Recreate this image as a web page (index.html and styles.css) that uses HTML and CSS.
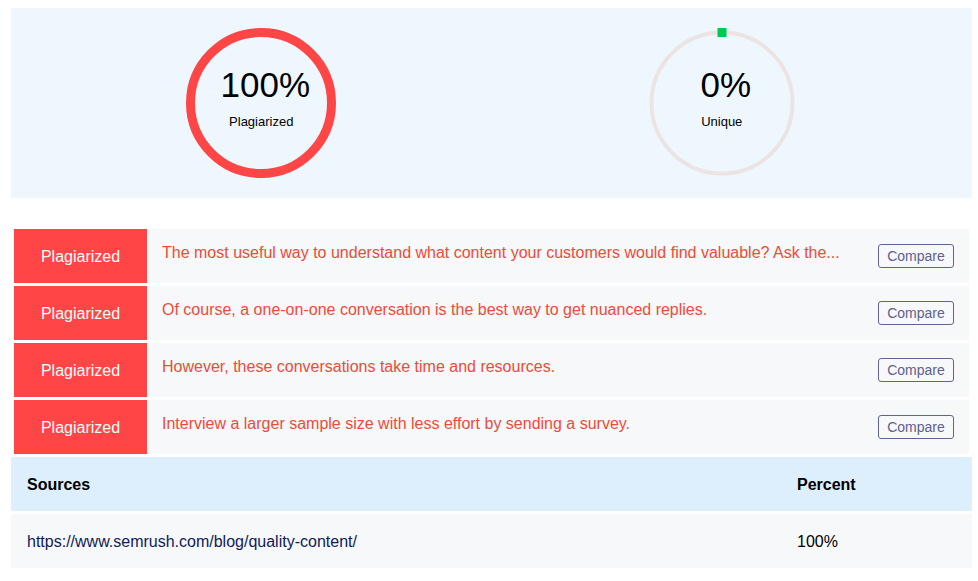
FILE: index.html
```html
<!DOCTYPE html>
<html>
<head>
<meta charset="utf-8">
<link rel="stylesheet" href="styles.css">
</head>
<body>
<section class="summary">
  <div class="gauge">
    <svg class="ring" width="150" height="150" viewBox="0 0 150 150">
      <circle cx="75" cy="75" r="70.5" fill="none" stroke="#ebe4e2" stroke-width="4"/>
      <circle cx="75" cy="75" r="70.5" fill="none" stroke="#ff4646" stroke-width="9"/>
    </svg>
    <div class="gauge-text">
      <div class="pct">100%</div>
      <div class="cap">Plagiarized</div>
    </div>
  </div>
  <div class="gauge">
    <svg class="ring" width="150" height="150" viewBox="0 0 150 150">
      <circle cx="75" cy="75" r="70.5" fill="none" stroke="#ebe4e2" stroke-width="4"/>
      <rect x="70.5" y="0" width="9" height="9" fill="#00c853"/>
    </svg>
    <div class="gauge-text">
      <div class="pct">0%</div>
      <div class="cap">Unique</div>
    </div>
  </div>
</section>

<section class="matches">
  <div class="match">
    <div class="tag">Plagiarized</div>
    <div class="sentence">The most useful way to understand what content your customers would find valuable? Ask the...</div>
    <div class="action"><button class="compare">Compare</button></div>
  </div>
  <div class="match">
    <div class="tag">Plagiarized</div>
    <div class="sentence">Of course, a one-on-one conversation is the best way to get nuanced replies.</div>
    <div class="action"><button class="compare">Compare</button></div>
  </div>
  <div class="match">
    <div class="tag">Plagiarized</div>
    <div class="sentence">However, these conversations take time and resources.</div>
    <div class="action"><button class="compare">Compare</button></div>
  </div>
  <div class="match">
    <div class="tag">Plagiarized</div>
    <div class="sentence">Interview a larger sample size with less effort by sending a survey.</div>
    <div class="action"><button class="compare">Compare</button></div>
  </div>
</section>

<section class="sources">
  <div class="src-row src-head">
    <div class="src-cell">Sources</div>
    <div class="src-cell">Percent</div>
  </div>
  <div class="src-row src-data">
    <div class="src-cell url">https://www.semrush.com/blog/quality-content/</div>
    <div class="src-cell">100%</div>
  </div>
</section>
</body>
</html>
```

FILE: styles.css
```css
* { box-sizing: border-box; }

html, body {
  margin: 0;
  padding: 0;
  background: #ffffff;
}

body {
  font-family: "Liberation Sans", Arial, sans-serif;
  color: #000;
  padding: 8px 6px 0 11px;
}

.summary {
  background: #eff7fe;
  height: 190px;
  padding: 20px 20px;
  display: grid;
  grid-template-columns: 1fr 1fr;
}

.gauge {
  position: relative;
  width: 150px;
  height: 150px;
  justify-self: center;
}

.ring {
  display: block;
}

.gauge-text {
  position: absolute;
  inset: 0;
  text-align: center;
}

.pct {
  font-size: 35px;
  line-height: 40px;
  margin-top: 37px;
  padding-left: 8px;
}

.cap {
  font-size: 13px;
  line-height: 15px;
  margin-top: 9px;
}

.matches {
  margin-top: 31px;
  padding: 0 3px;
  display: flex;
  flex-direction: column;
  gap: 3px;
}

.match {
  display: flex;
  height: 54px;
  background: #f7f8fa;
}

.tag {
  width: 133px;
  flex: none;
  background: #ff4545;
  color: #ffffff;
  font-size: 16px;
  display: flex;
  align-items: center;
  justify-content: center;
  padding-top: 2px;
}

.sentence {
  flex: 1;
  color: #f04a38;
  font-size: 16px;
  line-height: 18px;
  padding: 15px 0 0 15px;
  white-space: nowrap;
  overflow: hidden;
}

.action {
  flex: none;
  display: flex;
  align-items: center;
  padding: 0 15px 0 20px;
}

.compare {
  font-family: "Liberation Sans", Arial, sans-serif;
  font-size: 14px;
  line-height: 16px;
  color: #5c6190;
  background: transparent;
  border: 1px solid #60658f;
  border-radius: 3px;
  padding: 3px 8px;
  width: 76px;
  height: 24px;
}

.sources {
  margin-top: 3px;
}

.src-row {
  display: grid;
  grid-template-columns: 770px 1fr;
  height: 54px;
  align-items: center;
  font-size: 16px;
  padding-top: 2px;
}

.src-head {
  background: #ddeefd;
  font-weight: bold;
  border-bottom: 3px solid #ffffff;
  height: 57px;
}

.src-data {
  background: #f7f8fa;
}

.src-cell {
  padding-left: 16px;
}

.url {
  color: #101a5c;
}
```
